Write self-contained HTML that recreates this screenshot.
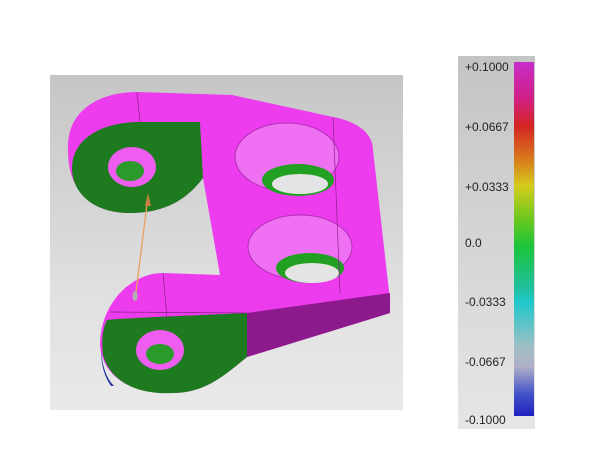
<!DOCTYPE html>
<html><head><style>
html,body{margin:0;padding:0;background:#fff;width:600px;height:470px;overflow:hidden;font-family:"Liberation Sans",sans-serif}
.view{position:absolute;left:50px;top:75px;width:353px;height:335px;background:linear-gradient(#c6c6c6,#e2e2e2 70%,#e9e9e9)}
.leg{position:absolute;left:458px;top:56px;width:77px;height:373px;background:linear-gradient(#c4c4c4,#e6e6e6)}
.bar{position:absolute;left:514px;top:62px;width:20px;height:354px;background:linear-gradient(#c82ec8 0%,#d0208a 10%,#d42424 18%,#d8801c 28%,#d4cc1c 35%,#64c820 45%,#1cc43a 52%,#20c0a0 64%,#20c8cc 68%,#9cc0c4 80%,#b0b0c8 86%,#4050c8 94%,#2020c0 100%)}
.l{position:absolute;left:465px;font-size:12px;color:#222}
</style></head><body>
<div class="view"></div>
<svg width="600" height="470" style="position:absolute;left:0;top:0">
<path d="M68,150 C66,110 100,92 137,92 L232,95 L333,117 C360,122 373,135 373,150 L390,300 L390,313 L247,357 C225,375 205,393 173,393 C130,395 102,375 100,345 C100,305 130,273 163,273 L220,275 L203,178 C190,195 170,213 130,213 C90,213 68,190 68,150 Z" fill="#ec3cee"/>
<path d="M140,122 L200,122 L203,178 C190,195 170,213 130,213 C92,213 72,192 72,168 C72,140 100,122 140,122 Z" fill="#1e7a1e"/>
<ellipse cx="132" cy="167" rx="24" ry="20" fill="#ee5cf0"/>
<ellipse cx="130" cy="171" rx="14" ry="10" fill="#2a9a2a"/>
<path d="M247,313 L390,293 L390,313 L247,357 Z" fill="#8c1a8c"/>
<path d="M107,320 C125,318 180,316 247,313 L247,357 C225,375 205,393 173,393 C135,395 110,380 103,355 C101,340 103,328 107,320 Z" fill="#1e7a1e"/>
<path d="M101,350 C102,365 106,378 114,386 L111,386 C104,376 101,364 101,350Z" fill="#2030a0"/>
<ellipse cx="160" cy="350" rx="24" ry="20" fill="#ee5cf0"/>
<ellipse cx="160" cy="354" rx="14" ry="10" fill="#2a9a2a"/>
<ellipse cx="287" cy="157" rx="52" ry="34" fill="#f070f4" stroke="#b030b4" stroke-width="1"/>
<ellipse cx="298" cy="180" rx="36" ry="16" fill="#22a022"/>
<ellipse cx="300" cy="184" rx="28" ry="10" fill="#e4e4e4"/>
<ellipse cx="300" cy="247" rx="52" ry="32" fill="#f070f4" stroke="#b030b4" stroke-width="1"/>
<ellipse cx="310" cy="268" rx="34" ry="15" fill="#22a022"/>
<ellipse cx="312" cy="273" rx="27" ry="10" fill="#e4e4e4"/>
<line x1="137" y1="92" x2="140" y2="122" stroke="#8a208a" stroke-width="0.7"/>
<line x1="333" y1="117" x2="340" y2="293" stroke="#8a208a" stroke-width="0.7"/>
<line x1="163" y1="273" x2="167" y2="318" stroke="#8a208a" stroke-width="0.7"/>
<line x1="110" y1="312" x2="247" y2="313" stroke="#8a208a" stroke-width="0.7"/>
<line x1="148" y1="196" x2="135" y2="300" stroke="#e8a060" stroke-width="1.3"/>
<path d="M148,193 L145,206 L151,206Z" fill="#c88040"/>
<ellipse cx="135" cy="296" rx="2.5" ry="5" fill="#b0b0b0"/>
</svg>
<div class="leg"></div>
<div class="bar"></div>
<div class="l" style="top:60px">+0.1000</div>
<div class="l" style="top:120px">+0.0667</div>
<div class="l" style="top:180px">+0.0333</div>
<div class="l" style="top:236px">0.0</div>
<div class="l" style="top:295px">-0.0333</div>
<div class="l" style="top:355px">-0.0667</div>
<div class="l" style="top:413px">-0.1000</div>
</body></html>
